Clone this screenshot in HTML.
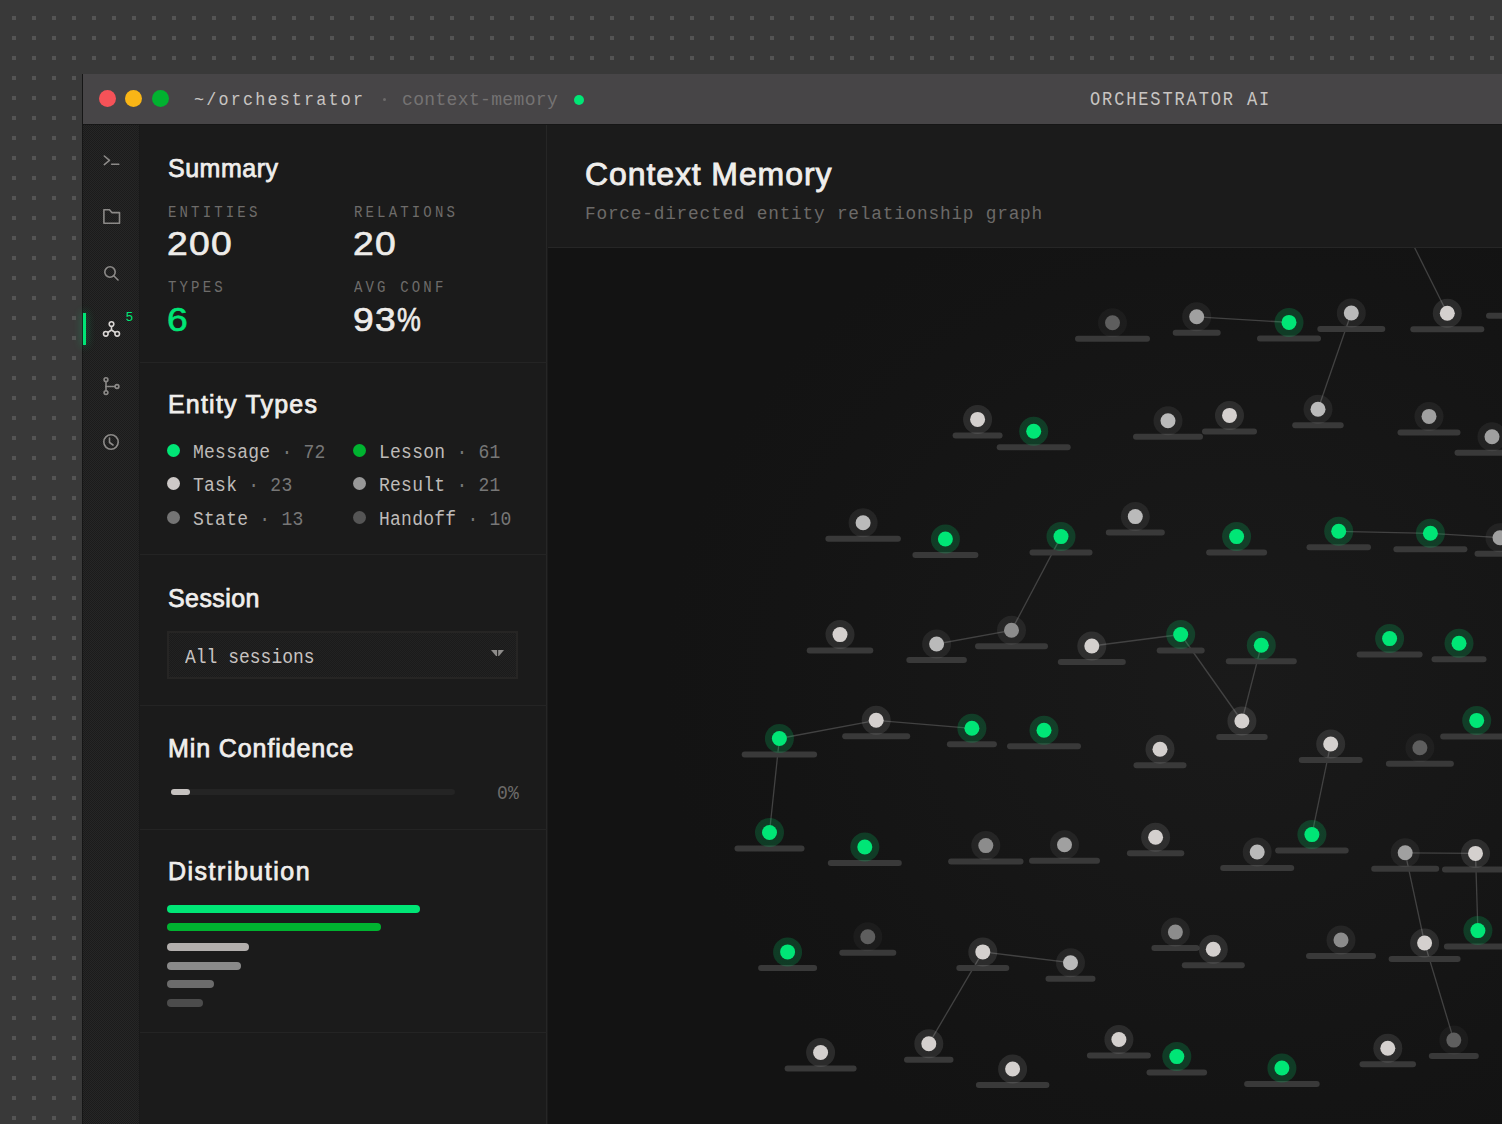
<!DOCTYPE html>
<html><head><meta charset="utf-8">
<style>
*{margin:0;padding:0;box-sizing:border-box}
html,body{width:1502px;height:1124px;overflow:hidden;background:#393939}
body{position:relative;font-family:"Liberation Sans",sans-serif}
.abs{position:absolute}
.mono{font-family:"Liberation Mono",monospace}
.dots{position:absolute;left:0;top:0}
.win{position:absolute;left:82px;top:74px;width:1420px;height:1050px;background:#1b1b1b;border-left:1px solid #161616}
.title{position:absolute;left:0;top:0;width:1420px;height:50px;background:#474547}
.side{position:absolute;left:0;top:50px;width:57px;height:1000px;background:repeating-conic-gradient(#1b1b1b 0 25%,#262626 0 50%) 0 0/2px 2px;border-right:1px solid #191919}
.panel{position:absolute;left:57px;top:50px;width:407px;height:1000px;background:#1b1b1b;border-right:1px solid #262626}
.sep{position:absolute;left:0;width:407px;height:1px;background:#242424}
.h{position:absolute;color:#f0eeec;font-size:25px;letter-spacing:0.4px;white-space:nowrap;-webkit-text-stroke:0.75px #f0eeec;line-height:1}
.lab{position:absolute;color:#6e6c6a;font-size:16.5px;letter-spacing:3.7px;transform:scaleX(0.85);transform-origin:0 0;white-space:nowrap;line-height:1}
.val{position:absolute;color:#eeecea;font-size:35.5px;letter-spacing:0.6px;transform:scale(1.05,0.95);transform-origin:0 0;white-space:nowrap;line-height:1;-webkit-text-stroke:0.7px #eeecea}
.leg{position:absolute;font-size:18px;letter-spacing:0.25px;color:#bfbbb9;white-space:nowrap;line-height:1;transform:scaleY(1.14);transform-origin:0 13.8px}
.leg span{color:#777}
.ld{position:absolute;width:13px;height:13px;border-radius:50%}
.bar{position:absolute;left:110px;height:7.5px;border-radius:4px}
.graph{position:absolute;left:548px;top:248px}
</style></head><body>
<svg class="dots" width="1502" height="1124"><defs><pattern id="dp" x="0" y="0" width="20" height="20" patternUnits="userSpaceOnUse"><rect x="12" y="16" width="4" height="4" fill="#545454"/></pattern><pattern id="dp2" x="0" y="0" width="20" height="20" patternUnits="userSpaceOnUse"><rect x="10" y="16" width="4" height="4" fill="#545454"/></pattern></defs><rect width="303" height="1124" fill="url(#dp)"/><rect x="303" width="1199" height="1124" fill="url(#dp2)"/></svg>

<div class="win">
  <div class="title">
    <div class="abs" style="left:16px;top:16px;width:17px;height:17px;border-radius:50%;background:#f65258"></div>
    <div class="abs" style="left:42.3px;top:16px;width:17px;height:17px;border-radius:50%;background:#f9b516"></div>
    <div class="abs" style="left:69px;top:16px;width:17px;height:17px;border-radius:50%;background:#01b230"></div>
    <div class="abs mono" style="left:111px;top:17px;font-size:19px;letter-spacing:2.5px;transform:scaleX(0.88);transform-origin:0 0;color:#c9c5c3;line-height:1;white-space:nowrap">~/orchestrator</div>
    <div class="abs" style="left:299.5px;top:23.5px;width:3px;height:3px;border-radius:50%;background:#6c6a6a"></div>
    <div class="abs mono" style="left:319px;top:16.5px;font-size:18px;letter-spacing:0.35px;color:#757373;line-height:1;white-space:nowrap">context-memory</div>
    <div class="abs" style="left:491px;top:21px;width:10px;height:10px;border-radius:50%;background:#00e676"></div>
    <div class="abs mono" style="left:1007px;top:16px;font-size:20px;letter-spacing:2.2px;transform:scaleX(0.85);transform-origin:0 0;color:#c9c5c3;line-height:1;white-space:nowrap">ORCHESTRATOR AI</div>
  </div>
  <div class="abs" style="left:0;top:50px;width:1420px;height:1px;background:#161616;z-index:5"></div>
  <div class="side">
    <svg width="57" height="400" style="position:absolute;left:0;top:0" fill="none" stroke="#8c8a88" stroke-width="1.6" stroke-linecap="round" stroke-linejoin="round">
      <!-- terminal -->
      <path d="M21.3 32 L26.5 36.3 L21.3 40.6"/><path d="M28.6 40.2 L35.8 40.2"/>
      <!-- folder -->
      <path d="M20.9 85.8 V99.3 H36.5 V88.6 H28.8 L26.4 85.8 Z"/>
      <!-- search -->
      <circle cx="27" cy="148" r="5.2"/><path d="M31 152 L35 156"/>
      <!-- git -->
      <circle cx="23" cy="255.7" r="1.9"/><circle cx="23" cy="268.6" r="1.9"/><circle cx="34" cy="262.5" r="1.9"/>
      <path d="M23 257.6 V266.7"/><path d="M23 262.5 H32.1"/>
      <!-- clock -->
      <circle cx="28" cy="318" r="7.2"/><path d="M26.5 314 V318.5 L30 321"/>
    </svg>
    <svg width="57" height="60" style="position:absolute;left:0;top:177.5px" fill="none" stroke="#d9d5d3" stroke-width="1.6">
      <circle cx="28.5" cy="22" r="2.3"/><circle cx="22.8" cy="31.8" r="2.3"/><circle cx="34.2" cy="31.8" r="2.3"/>
      <path d="M28.5 24.3 V28 L24.8 30.5 M28.5 28 L32.2 30.5"/>
    </svg>
    <div class="abs" style="left:0;top:189px;width:3px;height:32px;background:#00e676;box-shadow:0 0 8px 1px rgba(0,230,118,0.3)"></div>
    <div class="abs mono" style="left:42.5px;top:187px;font-size:13px;color:#00e676;line-height:1">5</div>
  </div>
  <div class="panel">
    <div class="h" style="left:28px;top:31.5px;letter-spacing:0.5px">Summary</div>
    <div class="lab mono" style="left:28px;top:81px">ENTITIES</div>
    <div class="lab mono" style="left:214px;top:81px">RELATIONS</div>
    <div class="val" style="left:27px;top:103px;letter-spacing:1.2px">200</div>
    <div class="val" style="left:213px;top:103px;letter-spacing:1.2px">20</div>
    <div class="lab mono" style="left:28px;top:156px">TYPES</div>
    <div class="lab mono" style="left:214px;top:156px">AVG CONF</div>
    <div class="val" style="left:27px;top:179px;color:#00e676;-webkit-text-stroke-color:#00e676">6</div>
    <div class="val" style="left:213px;top:179px;letter-spacing:1.2px">93<span style="display:inline-block;transform:scaleX(0.72);transform-origin:0 0;letter-spacing:0">%</span></div>
    <div class="sep" style="top:238px"></div>

        <div class="h" style="left:28px;top:267.5px;letter-spacing:1.2px">Entity Types</div>
    <div class="ld" style="left:27px;top:320px;background:#00e676"></div>
    <div class="leg mono" style="left:53px;top:320px">Message <span>· 72</span></div>
    <div class="ld" style="left:213px;top:320px;background:#00b330"></div>
    <div class="leg mono" style="left:239px;top:320px">Lesson <span>· 61</span></div>
    <div class="ld" style="left:27px;top:353px;background:#cdc9c7"></div>
    <div class="leg mono" style="left:53px;top:353px">Task <span>· 23</span></div>
    <div class="ld" style="left:213px;top:353px;background:#989898"></div>
    <div class="leg mono" style="left:239px;top:353px">Result <span>· 21</span></div>
    <div class="ld" style="left:27px;top:387px;background:#747474"></div>
    <div class="leg mono" style="left:53px;top:387px">State <span>· 13</span></div>
    <div class="ld" style="left:213px;top:387px;background:#555"></div>
    <div class="leg mono" style="left:239px;top:387px">Handoff <span>· 10</span></div>
    <div class="sep" style="top:430px"></div>

    <div class="h" style="left:28px;top:461.5px;letter-spacing:0.4px">Session</div>
    <div class="abs" style="left:27px;top:507px;width:351px;height:48px;border:2px solid #262524;background:repeating-conic-gradient(#1b1b1b 0 25%,#222 0 50%) 0 0/2px 2px"></div>
    <div class="leg mono" style="left:45px;top:524.5px;color:#c8c4c2;letter-spacing:0">All sessions</div>
    <svg class="abs" style="left:351.3px;top:525.7px" width="14" height="8"><path d="M0 0 H13 L8 6 H5 Z" fill="#8e8c8a"/><rect x="6" y="0" width="1.2" height="6" fill="#2a2a2a"/></svg>
    <div class="sep" style="top:581px"></div>

    <div class="h" style="left:28px;top:611.5px;letter-spacing:0.9px">Min Confidence</div>
    <div class="abs" style="left:31px;top:665px;width:284px;height:6px;border-radius:3px;background:#242424"></div>
    <div class="abs" style="left:31px;top:665px;width:19px;height:6px;border-radius:3px;background:#c6c2c0"></div>
    <div class="leg mono" style="left:357px;top:661px;color:#6e6c6a">0%</div>
    <div class="sep" style="top:705px"></div>

    <div class="h" style="left:28px;top:735px;letter-spacing:1.5px">Distribution</div>
    <div class="bar" style="left:27px;top:781px;width:253px;background:#00e676"></div>
    <div class="bar" style="left:27px;top:799px;width:214px;background:#00b330"></div>
    <div class="bar" style="left:27px;top:819px;width:82px;background:#b3afad"></div>
    <div class="bar" style="left:27px;top:838px;width:74px;background:#8a8a8a"></div>
    <div class="bar" style="left:27px;top:856px;width:47px;background:#6c6c6c"></div>
    <div class="bar" style="left:27px;top:875px;width:36px;background:#4c4c4c"></div>
    <div class="sep" style="top:908px"></div>
  </div>
  <div class="abs" style="left:465px;top:50px;width:955px;height:124px;background:#1b1b1b;border-bottom:1px solid #262626">
    <div class="h" style="left:37px;top:34px;font-size:32px;letter-spacing:0.9px;-webkit-text-stroke:0.85px #f0eeec">Context Memory</div>
    <div class="abs mono" style="left:37px;top:82px;font-size:17.8px;letter-spacing:0.78px;color:#6c6a68;line-height:1;white-space:nowrap">Force-directed entity relationship graph</div>
  </div>
</div>
<svg class="graph" width="954" height="876" viewBox="0 0 954 876">
<defs><radialGradient id="gbg" cx="0.72" cy="0.5" r="0.6"><stop offset="0" stop-color="#1a1a1a"/><stop offset="0.4" stop-color="#171717"/><stop offset="0.8" stop-color="#141414"/><stop offset="1" stop-color="#131313"/></radialGradient></defs>
<rect width="954" height="876" fill="url(#gbg)"/>
<g stroke="#424242" stroke-width="1.3"><line x1="648.7" y1="68.8" x2="741.0" y2="74.4"/>
<line x1="803.3" y1="65.0" x2="770.0" y2="161.2"/>
<line x1="513.0" y1="288.6" x2="463.5" y2="382.3"/>
<line x1="388.6" y1="396.0" x2="463.5" y2="382.3"/>
<line x1="231.4" y1="490.5" x2="328.2" y2="472.3"/>
<line x1="328.2" y1="472.3" x2="423.9" y2="480.3"/>
<line x1="231.4" y1="490.5" x2="221.5" y2="584.5"/>
<line x1="543.8" y1="398.0" x2="632.7" y2="386.5"/>
<line x1="632.7" y1="386.5" x2="693.9" y2="473.0"/>
<line x1="713.3" y1="397.3" x2="693.9" y2="473.0"/>
<line x1="782.7" y1="496.0" x2="763.9" y2="586.6"/>
<line x1="857.2" y1="604.8" x2="927.5" y2="605.4"/>
<line x1="857.2" y1="604.8" x2="876.6" y2="695.0"/>
<line x1="876.6" y1="695.0" x2="905.8" y2="792.1"/>
<line x1="927.5" y1="605.4" x2="929.9" y2="682.6"/>
<line x1="434.8" y1="703.9" x2="522.5" y2="714.7"/>
<line x1="434.8" y1="703.9" x2="380.8" y2="795.8"/>
<line x1="790.7" y1="283.3" x2="882.4" y2="285.3"/>
<line x1="882.4" y1="285.3" x2="952.0" y2="289.7"/>
<line x1="856.7" y1="-20.2" x2="899.3" y2="65.2"/></g>
<g fill="#393939"><rect x="527.0" y="87.7" width="75.0" height="6" rx="3"/><rect x="624.7" y="81.8" width="48.0" height="6" rx="3"/><rect x="709.0" y="87.4" width="64.0" height="6" rx="3"/><rect x="769.3" y="78.0" width="68.0" height="6" rx="3"/><rect x="862.3" y="78.2" width="74.0" height="6" rx="3"/><rect x="585.0" y="185.7" width="70.0" height="6" rx="3"/><rect x="654.0" y="180.4" width="55.0" height="6" rx="3"/><rect x="744.2" y="174.2" width="51.5" height="6" rx="3"/><rect x="849.5" y="181.4" width="63.0" height="6" rx="3"/><rect x="906.5" y="201.7" width="75.0" height="6" rx="3"/><rect x="557.8" y="281.6" width="59.0" height="6" rx="3"/><rect x="658.1" y="301.6" width="61.0" height="6" rx="3"/><rect x="758.5" y="296.3" width="64.5" height="6" rx="3"/><rect x="845.4" y="298.3" width="74.0" height="6" rx="3"/><rect x="926.5" y="302.7" width="51.0" height="6" rx="3"/><rect x="404.6" y="184.4" width="50.0" height="6" rx="3"/><rect x="448.7" y="196.3" width="74.0" height="6" rx="3"/><rect x="277.4" y="287.7" width="75.5" height="6" rx="3"/><rect x="364.4" y="304.0" width="66.0" height="6" rx="3"/><rect x="481.5" y="301.6" width="63.0" height="6" rx="3"/><rect x="258.7" y="399.6" width="66.6" height="6" rx="3"/><rect x="358.3" y="409.0" width="60.6" height="6" rx="3"/><rect x="427.0" y="395.3" width="73.0" height="6" rx="3"/><rect x="509.8" y="411.0" width="68.0" height="6" rx="3"/><rect x="193.7" y="503.5" width="75.4" height="6" rx="3"/><rect x="294.2" y="485.3" width="68.0" height="6" rx="3"/><rect x="398.9" y="493.3" width="50.0" height="6" rx="3"/><rect x="459.0" y="495.2" width="74.0" height="6" rx="3"/><rect x="186.5" y="597.5" width="70.0" height="6" rx="3"/><rect x="279.8" y="612.0" width="74.0" height="6" rx="3"/><rect x="400.1" y="610.6" width="75.4" height="6" rx="3"/><rect x="481.0" y="609.8" width="71.0" height="6" rx="3"/><rect x="608.7" y="399.5" width="48.0" height="6" rx="3"/><rect x="677.8" y="410.3" width="71.0" height="6" rx="3"/><rect x="668.2" y="486.0" width="51.5" height="6" rx="3"/><rect x="808.6" y="403.6" width="66.0" height="6" rx="3"/><rect x="883.5" y="408.3" width="55.0" height="6" rx="3"/><rect x="892.2" y="485.4" width="73.0" height="6" rx="3"/><rect x="585.5" y="514.2" width="53.0" height="6" rx="3"/><rect x="750.7" y="509.0" width="64.0" height="6" rx="3"/><rect x="837.9" y="512.8" width="68.0" height="6" rx="3"/><rect x="727.1" y="599.6" width="73.6" height="6" rx="3"/><rect x="578.9" y="602.2" width="57.4" height="6" rx="3"/><rect x="672.2" y="617.0" width="74.0" height="6" rx="3"/><rect x="823.2" y="617.8" width="68.0" height="6" rx="3"/><rect x="894.0" y="618.4" width="67.0" height="6" rx="3"/><rect x="210.1" y="716.9" width="59.0" height="6" rx="3"/><rect x="291.3" y="701.7" width="57.0" height="6" rx="3"/><rect x="408.3" y="716.9" width="53.0" height="6" rx="3"/><rect x="497.5" y="727.7" width="50.0" height="6" rx="3"/><rect x="356.0" y="808.8" width="49.5" height="6" rx="3"/><rect x="236.6" y="817.5" width="72.0" height="6" rx="3"/><rect x="427.9" y="834.0" width="73.5" height="6" rx="3"/><rect x="603.4" y="697.1" width="48.0" height="6" rx="3"/><rect x="633.8" y="714.2" width="63.0" height="6" rx="3"/><rect x="758.0" y="705.0" width="70.0" height="6" rx="3"/><rect x="840.6" y="708.0" width="72.0" height="6" rx="3"/><rect x="895.9" y="695.6" width="68.0" height="6" rx="3"/><rect x="538.9" y="804.5" width="64.0" height="6" rx="3"/><rect x="598.5" y="821.6" width="60.6" height="6" rx="3"/><rect x="696.1" y="833.0" width="75.6" height="6" rx="3"/><rect x="811.5" y="813.3" width="56.5" height="6" rx="3"/><rect x="880.8" y="805.1" width="50.0" height="6" rx="3"/><rect x="938" y="64.7" width="60" height="6" rx="3"/></g>
<circle cx="564.5" cy="74.7" r="14.5" fill="rgba(255,255,255,0.035)"/><circle cx="648.7" cy="68.8" r="14.5" fill="rgba(255,255,255,0.06)"/><circle cx="741.0" cy="74.4" r="14.5" fill="rgba(0,220,110,0.2)"/><circle cx="803.3" cy="65.0" r="14.5" fill="rgba(255,255,255,0.07)"/><circle cx="899.3" cy="65.2" r="14.5" fill="rgba(255,255,255,0.1)"/><circle cx="620.0" cy="172.7" r="14.5" fill="rgba(255,255,255,0.07)"/><circle cx="681.5" cy="167.4" r="14.5" fill="rgba(255,255,255,0.1)"/><circle cx="770.0" cy="161.2" r="14.5" fill="rgba(255,255,255,0.07)"/><circle cx="881.0" cy="168.4" r="14.5" fill="rgba(255,255,255,0.06)"/><circle cx="944.0" cy="188.7" r="14.5" fill="rgba(255,255,255,0.06)"/><circle cx="587.3" cy="268.6" r="14.5" fill="rgba(255,255,255,0.07)"/><circle cx="688.6" cy="288.6" r="14.5" fill="rgba(0,220,110,0.2)"/><circle cx="790.7" cy="283.3" r="14.5" fill="rgba(0,220,110,0.2)"/><circle cx="882.4" cy="285.3" r="14.5" fill="rgba(0,220,110,0.2)"/><circle cx="952.0" cy="289.7" r="14.5" fill="rgba(255,255,255,0.06)"/><circle cx="429.6" cy="171.4" r="14.5" fill="rgba(255,255,255,0.1)"/><circle cx="485.7" cy="183.3" r="14.5" fill="rgba(0,220,110,0.2)"/><circle cx="315.1" cy="274.7" r="14.5" fill="rgba(255,255,255,0.07)"/><circle cx="397.4" cy="291.0" r="14.5" fill="rgba(0,220,110,0.2)"/><circle cx="513.0" cy="288.6" r="14.5" fill="rgba(0,220,110,0.2)"/><circle cx="292.0" cy="386.6" r="14.5" fill="rgba(255,255,255,0.1)"/><circle cx="388.6" cy="396.0" r="14.5" fill="rgba(255,255,255,0.07)"/><circle cx="463.5" cy="382.3" r="14.5" fill="rgba(255,255,255,0.065)"/><circle cx="543.8" cy="398.0" r="14.5" fill="rgba(255,255,255,0.1)"/><circle cx="231.4" cy="490.5" r="14.5" fill="rgba(0,220,110,0.2)"/><circle cx="328.2" cy="472.3" r="14.5" fill="rgba(255,255,255,0.1)"/><circle cx="423.9" cy="480.3" r="14.5" fill="rgba(0,220,110,0.2)"/><circle cx="496.0" cy="482.2" r="14.5" fill="rgba(0,220,110,0.2)"/><circle cx="221.5" cy="584.5" r="14.5" fill="rgba(0,220,110,0.2)"/><circle cx="316.8" cy="599.0" r="14.5" fill="rgba(0,220,110,0.2)"/><circle cx="437.8" cy="597.6" r="14.5" fill="rgba(255,255,255,0.065)"/><circle cx="516.5" cy="596.8" r="14.5" fill="rgba(255,255,255,0.06)"/><circle cx="632.7" cy="386.5" r="14.5" fill="rgba(0,220,110,0.2)"/><circle cx="713.3" cy="397.3" r="14.5" fill="rgba(0,220,110,0.2)"/><circle cx="693.9" cy="473.0" r="14.5" fill="rgba(255,255,255,0.1)"/><circle cx="841.6" cy="390.6" r="14.5" fill="rgba(0,220,110,0.2)"/><circle cx="911.0" cy="395.3" r="14.5" fill="rgba(0,220,110,0.2)"/><circle cx="928.7" cy="472.4" r="14.5" fill="rgba(0,220,110,0.2)"/><circle cx="612.0" cy="501.2" r="14.5" fill="rgba(255,255,255,0.1)"/><circle cx="782.7" cy="496.0" r="14.5" fill="rgba(255,255,255,0.1)"/><circle cx="871.9" cy="499.8" r="14.5" fill="rgba(255,255,255,0.035)"/><circle cx="763.9" cy="586.6" r="14.5" fill="rgba(0,220,110,0.2)"/><circle cx="607.6" cy="589.2" r="14.5" fill="rgba(255,255,255,0.1)"/><circle cx="709.2" cy="604.0" r="14.5" fill="rgba(255,255,255,0.07)"/><circle cx="857.2" cy="604.8" r="14.5" fill="rgba(255,255,255,0.06)"/><circle cx="927.5" cy="605.4" r="14.5" fill="rgba(255,255,255,0.1)"/><circle cx="239.6" cy="703.9" r="14.5" fill="rgba(0,220,110,0.2)"/><circle cx="319.8" cy="688.7" r="14.5" fill="rgba(255,255,255,0.035)"/><circle cx="434.8" cy="703.9" r="14.5" fill="rgba(255,255,255,0.1)"/><circle cx="522.5" cy="714.7" r="14.5" fill="rgba(255,255,255,0.07)"/><circle cx="380.8" cy="795.8" r="14.5" fill="rgba(255,255,255,0.1)"/><circle cx="272.6" cy="804.5" r="14.5" fill="rgba(255,255,255,0.1)"/><circle cx="464.6" cy="821.0" r="14.5" fill="rgba(255,255,255,0.1)"/><circle cx="627.4" cy="684.1" r="14.5" fill="rgba(255,255,255,0.065)"/><circle cx="665.3" cy="701.2" r="14.5" fill="rgba(255,255,255,0.1)"/><circle cx="793.0" cy="692.0" r="14.5" fill="rgba(255,255,255,0.065)"/><circle cx="876.6" cy="695.0" r="14.5" fill="rgba(255,255,255,0.1)"/><circle cx="929.9" cy="682.6" r="14.5" fill="rgba(0,220,110,0.2)"/><circle cx="570.9" cy="791.5" r="14.5" fill="rgba(255,255,255,0.1)"/><circle cx="628.8" cy="808.6" r="14.5" fill="rgba(0,220,110,0.2)"/><circle cx="733.9" cy="820.0" r="14.5" fill="rgba(0,220,110,0.2)"/><circle cx="839.8" cy="800.3" r="14.5" fill="rgba(255,255,255,0.1)"/><circle cx="905.8" cy="792.1" r="14.5" fill="rgba(255,255,255,0.035)"/>
<circle cx="564.5" cy="74.7" r="7.5" fill="#5e5e5e"/><circle cx="648.7" cy="68.8" r="7.5" fill="#a0a0a0"/><circle cx="741.0" cy="74.4" r="7.5" fill="#00e676"/><circle cx="803.3" cy="65.0" r="7.5" fill="#bababa"/><circle cx="899.3" cy="65.2" r="7.5" fill="#d4d0ce"/><circle cx="620.0" cy="172.7" r="7.5" fill="#bababa"/><circle cx="681.5" cy="167.4" r="7.5" fill="#d4d0ce"/><circle cx="770.0" cy="161.2" r="7.5" fill="#bababa"/><circle cx="881.0" cy="168.4" r="7.5" fill="#a0a0a0"/><circle cx="944.0" cy="188.7" r="7.5" fill="#a0a0a0"/><circle cx="587.3" cy="268.6" r="7.5" fill="#bababa"/><circle cx="688.6" cy="288.6" r="7.5" fill="#00e676"/><circle cx="790.7" cy="283.3" r="7.5" fill="#00e676"/><circle cx="882.4" cy="285.3" r="7.5" fill="#00e676"/><circle cx="952.0" cy="289.7" r="7.5" fill="#a0a0a0"/><circle cx="429.6" cy="171.4" r="7.5" fill="#d4d0ce"/><circle cx="485.7" cy="183.3" r="7.5" fill="#00e676"/><circle cx="315.1" cy="274.7" r="7.5" fill="#bababa"/><circle cx="397.4" cy="291.0" r="7.5" fill="#00e676"/><circle cx="513.0" cy="288.6" r="7.5" fill="#00e676"/><circle cx="292.0" cy="386.6" r="7.5" fill="#d4d0ce"/><circle cx="388.6" cy="396.0" r="7.5" fill="#bababa"/><circle cx="463.5" cy="382.3" r="7.5" fill="#8c8c8c"/><circle cx="543.8" cy="398.0" r="7.5" fill="#d4d0ce"/><circle cx="231.4" cy="490.5" r="7.5" fill="#00e676"/><circle cx="328.2" cy="472.3" r="7.5" fill="#d4d0ce"/><circle cx="423.9" cy="480.3" r="7.5" fill="#00e676"/><circle cx="496.0" cy="482.2" r="7.5" fill="#00e676"/><circle cx="221.5" cy="584.5" r="7.5" fill="#00e676"/><circle cx="316.8" cy="599.0" r="7.5" fill="#00e676"/><circle cx="437.8" cy="597.6" r="7.5" fill="#8c8c8c"/><circle cx="516.5" cy="596.8" r="7.5" fill="#a0a0a0"/><circle cx="632.7" cy="386.5" r="7.5" fill="#00e676"/><circle cx="713.3" cy="397.3" r="7.5" fill="#00e676"/><circle cx="693.9" cy="473.0" r="7.5" fill="#d4d0ce"/><circle cx="841.6" cy="390.6" r="7.5" fill="#00e676"/><circle cx="911.0" cy="395.3" r="7.5" fill="#00e676"/><circle cx="928.7" cy="472.4" r="7.5" fill="#00e676"/><circle cx="612.0" cy="501.2" r="7.5" fill="#d4d0ce"/><circle cx="782.7" cy="496.0" r="7.5" fill="#d4d0ce"/><circle cx="871.9" cy="499.8" r="7.5" fill="#5e5e5e"/><circle cx="763.9" cy="586.6" r="7.5" fill="#00e676"/><circle cx="607.6" cy="589.2" r="7.5" fill="#d4d0ce"/><circle cx="709.2" cy="604.0" r="7.5" fill="#bababa"/><circle cx="857.2" cy="604.8" r="7.5" fill="#a0a0a0"/><circle cx="927.5" cy="605.4" r="7.5" fill="#d4d0ce"/><circle cx="239.6" cy="703.9" r="7.5" fill="#00e676"/><circle cx="319.8" cy="688.7" r="7.5" fill="#5e5e5e"/><circle cx="434.8" cy="703.9" r="7.5" fill="#d4d0ce"/><circle cx="522.5" cy="714.7" r="7.5" fill="#bababa"/><circle cx="380.8" cy="795.8" r="7.5" fill="#d4d0ce"/><circle cx="272.6" cy="804.5" r="7.5" fill="#d4d0ce"/><circle cx="464.6" cy="821.0" r="7.5" fill="#d4d0ce"/><circle cx="627.4" cy="684.1" r="7.5" fill="#8c8c8c"/><circle cx="665.3" cy="701.2" r="7.5" fill="#d4d0ce"/><circle cx="793.0" cy="692.0" r="7.5" fill="#8c8c8c"/><circle cx="876.6" cy="695.0" r="7.5" fill="#d4d0ce"/><circle cx="929.9" cy="682.6" r="7.5" fill="#00e676"/><circle cx="570.9" cy="791.5" r="7.5" fill="#d4d0ce"/><circle cx="628.8" cy="808.6" r="7.5" fill="#00e676"/><circle cx="733.9" cy="820.0" r="7.5" fill="#00e676"/><circle cx="839.8" cy="800.3" r="7.5" fill="#d4d0ce"/><circle cx="905.8" cy="792.1" r="7.5" fill="#5e5e5e"/>
</svg>
</body></html>
